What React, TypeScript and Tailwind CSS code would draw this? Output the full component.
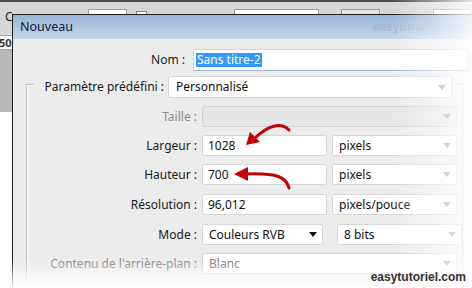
import React from 'react';

// Photoshop "Nouveau" dialog, cropped tutorial screenshot

function Arrow({ dark }: { dark?: boolean }) {
  return (
    <svg width="8" height="5" viewBox="0 0 8 5" className="shrink-0">
      <path d="M0 0 L8 0 L4 5 Z" fill={dark ? '#111' : '#9a9a9a'} />
    </svg>
  );
}

function Select({
  value,
  width,
  disabled,
  dark,
  muted,
}: {
  value?: string;
  width: string;
  disabled?: boolean;
  dark?: boolean;
  muted?: boolean;
}) {
  return (
    <div
      className={`${width} h-[21px] rounded-[2px] border flex items-center justify-between pl-[6px] pr-[5px] ${
        disabled ? 'border-[#d2d2d2] bg-[#e6e6e6]' : 'border-[#d6d6d6] bg-white'
      }`}
    >
      <span className={muted ? 'text-[#7a7a7a]' : 'text-[#111]'}>{value}</span>
      <Arrow dark={dark} />
    </div>
  );
}

function Input({ value, width }: { value: string; width: string }) {
  return (
    <div className={`${width} h-[21px] rounded-[2px] border border-[#d6d6d6] bg-white flex items-center pl-[5px] text-[#111]`}>
      {value}
    </div>
  );
}

function Row({ label, muted, children, className }: { label: string; muted?: boolean; children: React.ReactNode; className?: string }) {
  return (
    <div className={`flex items-center ${className ?? ''}`}>
      <div className={`w-[170px] text-right whitespace-nowrap ${muted ? 'text-[#8a8a8a]' : 'text-[#1a1a1a]'}`}>{label}</div>
      <div className="ml-[5px] flex items-center gap-[5px]">{children}</div>
    </div>
  );
}

export default function App() {
  return (
    <div className="relative w-[472px] h-[288px] overflow-hidden bg-white font-['Noto_Sans',sans-serif] text-[12px] leading-none">
      {/* application behind the dialog */}
      <div className="h-[2px] bg-[#4a4a4a]" />
      <div className="h-[33px] bg-[#d6d6d6] flex items-start pt-[7px] pl-[5px] text-[#222]">
        <span className="mt-[2px]">Co</span>
        <div className="ml-[68px] w-[41px] h-[20px] border border-[#9a9a9a] bg-white" />
        <div className="ml-[9px] mt-[2px] w-[11px] h-[11px] border border-[#888] bg-white" />
        <div className="ml-[87px] w-[88px] h-[20px] border border-[#9a9a9a] bg-white" />
        <div className="ml-[22px] w-[41px] h-[20px] border border-[#9a9a9a] bg-[#e4e4e4]" />
        <div className="ml-[53px] w-[40px] h-[20px] border border-[#9a9a9a] bg-white" />
      </div>
      <div className="flex flex-col w-[14px]">
        <div className="h-[15px] shrink-0 bg-white border-y border-[#aaa] flex items-center font-bold text-[#333] text-[11px] overflow-hidden">
          <span className="-ml-[1px]">50</span>
        </div>
        <div className="h-[62px] shrink-0 bg-[#b8b8b8]" />
      </div>

      {/* dialog window */}
      <div className="absolute left-[12px] top-[14px] w-[470px] h-[290px] border-l-[1.5px] border-t border-[#1c1c1c] bg-[#ececec]">
        <div className="h-[24px] bg-linear-to-b from-[#97b3d5] to-[#c4d7ec] flex items-center pl-[7px] text-[#15153a] text-[12.5px]">
          Nouveau
          <span className="ml-auto mr-[14px] font-['Liberation_Sans',sans-serif] font-bold text-[12px] text-[#a6bad2]">easytutoriel.com</span>
        </div>

        <div className="flex items-center mt-[10px]">
          <div className="w-[172px] text-right text-[#1a1a1a]">Nom :</div>
          <div className="ml-[8px] w-[275px] h-[22px] rounded-[2px] border border-[#c9d6e6] border-b-[#9fb8d6] bg-white flex items-center pl-[2px]">
            <span className="bg-[#3399ff] text-white px-[1px] py-[1px]">Sans titre-2</span>
          </div>
        </div>

        <div className="ml-[13px] mt-[13px] w-[437px] h-[230px] border-l border-t border-r border-[#c2c2c2] shadow-[inset_1px_1px_0_#fafafa]">
          <div className="-mt-[9px] ml-[7px] w-[423px] h-[22px] bg-[#ececec] flex items-center">
            <div className="w-[130px] text-right whitespace-nowrap text-[#1a1a1a]">Paramètre prédéfini :</div>
            <div className="ml-[4px] w-[284px] h-[22px] rounded-[2px] border border-[#d6d6d6] bg-white flex items-center justify-between pl-[7px] pr-[5px] text-[#111]">
              Personnalisé
              <Arrow />
            </div>
          </div>

          <Row label="Taille :" muted className="mt-[8px]">
            <Select width="w-[255px]" disabled />
          </Row>
          <Row label="Largeur :" className="mt-[8px]">
            <Input value="1028" width="w-[125px]" />
            <Select value="pixels" width="w-[125px]" />
          </Row>
          <Row label="Hauteur :" className="mt-[8px]">
            <Input value="700" width="w-[125px]" />
            <Select value="pixels" width="w-[125px]" />
          </Row>
          <Row label="Résolution :" className="mt-[9px]">
            <Input value="96,012" width="w-[125px]" />
            <Select value="pixels/pouce" width="w-[125px]" />
          </Row>
          <Row label="Mode :" className="mt-[9px]">
            <Select value="Couleurs RVB" width="w-[121px]" dark />
            <div className="w-[4px]" />
            <Select value="8 bits" width="w-[125px]" />
          </Row>
          <Row label="Contenu de l'arrière-plan :" muted className="mt-[8px]">
            <Select value="Blanc" width="w-[255px]" muted />
          </Row>
        </div>
      </div>

      {/* red annotation arrows */}
      <svg className="absolute left-0 top-0" width="472" height="288" viewBox="0 0 472 288">
        <path d="M289 130 C 281 122, 268 125, 254 139" fill="none" stroke="#c40000" strokeWidth="3" strokeLinecap="round" />
        <path d="M246 145 L250 132 L260 142 Z" fill="#c40000" />
        <path d="M289 188 C 286 177, 278 173, 246 174" fill="none" stroke="#c40000" strokeWidth="3" strokeLinecap="round" />
        <path d="M234 174 L248 167 L248 181 Z" fill="#c40000" />
      </svg>

      {/* screenshot fade */}
      <div className="absolute top-0 right-0 h-full w-[80px] bg-linear-to-r from-white/0 to-white/85" />
      <div className="absolute bottom-0 left-0 w-full h-[28px] bg-linear-to-b from-white/0 to-white" />

      <div className="absolute right-[6px] bottom-[5px] font-['Liberation_Sans',sans-serif] font-bold text-[12px] text-[#333]">
        easytutoriel.com
      </div>
    </div>
  );
}
